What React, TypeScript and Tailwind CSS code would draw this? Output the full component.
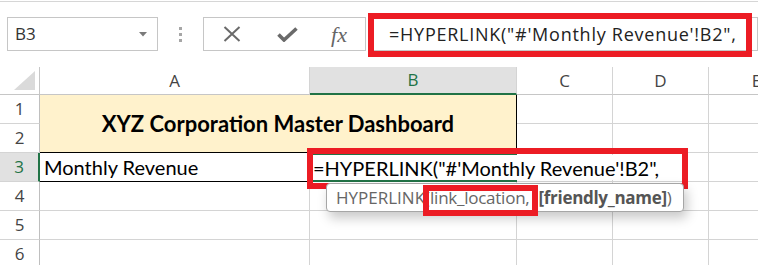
const ui = "font-['Open_Sans','Noto_Sans',sans-serif]"
const cell = "font-['Lato','Noto_Sans',sans-serif]"

const RED = "border-[#ec1c24]"

// column header cell
const ColHead = ({ label, active = false }: { label: string; active?: boolean }) => (
    <div
        className={`flex items-center justify-center border-r border-b ${
            active ? "bg-[#e1e1e1] border-b-2 border-b-[#217346] text-[#217346]" : "bg-white border-b-[#c6c6c6] text-[#444]"
        } border-r-[#d4d4d4] ${ui} text-[17px]`}
    >
        {label}
    </div>
)

// row header cell
const RowHead = ({ label, active = false }: { label: string; active?: boolean }) => (
    <div
        className={`flex items-center justify-center border-b border-r ${
            active ? "bg-[#e1e1e1] border-r-2 border-r-[#217346] text-[#217346]" : "bg-white border-r-[#bfbfbf] text-[#444]"
        } border-b-[#d4d4d4] ${ui} text-[17px]`}
    >
        {label}
    </div>
)

const Blank = () => <div className="border-r border-b border-[#d4d4d4]" />

const App = () => {
    return (
        <div className="relative w-[758px] h-[265px] overflow-hidden bg-white">

            {/* formula bar */}
            <div className="mt-px h-px bg-[#d6d6d6]" />
            <div className="flex items-center h-[34px] mt-[15px] mb-[16px] pl-[7px]">
                {/* name box */}
                <div className={`flex items-center justify-between w-[151px] h-full border border-[#c6c6c6] pl-[7px] pr-[10px] ${ui} text-[17px] text-[#333]`}>
                    <span>B3</span>
                    <svg width="8" height="5" viewBox="0 0 8 5">
                        <path d="M0 0H8L4 4.5Z" fill="#7a7a7a" />
                    </svg>
                </div>

                {/* dots */}
                <div className="flex flex-col gap-[3px] ml-[21px] mr-[21px]">
                    <span className="w-[3px] h-[3px] bg-[#a6a6a6]" />
                    <span className="w-[3px] h-[3px] bg-[#a6a6a6]" />
                    <span className="w-[3px] h-[3px] bg-[#a6a6a6]" />
                </div>

                {/* cancel / enter / fx */}
                <div className="flex items-center w-[163px] h-full border border-[#c6c6c6] text-[#6a6a6a]">
                    <div className="flex justify-center w-[56px]">
                        <svg width="18" height="16" viewBox="0 0 18 16">
                            <path d="M1.5 1L16.5 15M16.5 1L1.5 15" stroke="#6a6a6a" strokeWidth="2" />
                        </svg>
                    </div>
                    <div className="flex justify-center w-[54px]">
                        <svg width="21" height="15" viewBox="0 0 21 15">
                            <path d="M1.5 7.5L7 13L19.5 1.5" stroke="#6a6a6a" strokeWidth="3.6" fill="none" />
                        </svg>
                    </div>
                    <div className="flex justify-center w-[50px] font-['Liberation_Serif',serif] italic text-[22px] text-[#666]">
                        fx
                    </div>
                </div>

                {/* formula input */}
                <div className={`relative flex items-center flex-1 h-full ml-[2px] border border-[#c6c6c6] pl-[20px] ${ui} text-[18px] tracking-[0.75px] text-[#222] whitespace-nowrap`}>
                    =HYPERLINK("#'Monthly Revenue'!B2",
                    <div className={`absolute -left-[1px] -top-[5px] w-[384px] h-[44px] border-[6px] ${RED}`} />
                </div>
            </div>

            {/* sheet */}
            <div className="grid grid-cols-[40px_270px_207px_96px_96px_96px] grid-rows-[28px_repeat(6,29px)]">
                {/* corner */}
                <div className="relative border-r border-b border-[#c6c6c6]">
                    <svg className="absolute right-[4px] bottom-[4px]" width="21" height="19" viewBox="0 0 21 19">
                        <path d="M21 0V19H0Z" fill="#dadada" />
                    </svg>
                </div>
                <ColHead label="A" />
                <ColHead label="B" active />
                <ColHead label="C" />
                <ColHead label="D" />
                <ColHead label="E" />

                {/* rows 1-2 */}
                <RowHead label="1" />
                <div className={`col-span-2 row-span-2 flex items-center justify-center bg-[#fff2cc] border-r border-b border-black ${cell} font-bold text-[22px] text-black`}>
                    XYZ Corporation Master Dashboard
                </div>
                <Blank />
                <Blank />
                <Blank />
                <RowHead label="2" />
                <Blank />
                <Blank />
                <Blank />

                {/* row 3 */}
                <RowHead label="3" active />
                <div className={`flex items-center pl-[4px] border-r border-b border-black ${cell} text-[20px] text-black`}>
                    Monthly Revenue
                </div>
                <div className="relative border-2 border-[#217346]">
                    <div className={`absolute left-0 top-0 h-full flex items-center pl-[1px] pr-[4px] bg-white whitespace-nowrap ${cell} text-[20px] text-black`}>
                        =HYPERLINK("#'Monthly Revenue'!B2",
                    </div>
                    <div className={`absolute -left-[5px] -top-[7px] w-[381px] h-[41px] border-[6px] ${RED}`} />
                </div>
                <Blank />
                <Blank />
                <Blank />

                {/* row 4 */}
                <RowHead label="4" />
                <Blank />
                <div className="relative border-r border-b border-[#d4d4d4]">
                    {/* argument tooltip */}
                    <div className={`absolute left-[16px] top-[1px] z-10 flex items-center h-[29px] w-[358px] pl-[9px] rounded-[4px] border border-[#a6a6a6] bg-white shadow-[3px_6px_12px_rgba(0,0,0,0.22)] whitespace-nowrap ${ui} text-[17px] text-[#666]`}>
                        <span>HYPERLINK(</span>
                        <span className="tracking-[-0.25px]">link_location,</span>
                        <span className="ml-[9px] tracking-[-0.3px]">
                            <b className="text-[#555]">[friendly_name]</b>)
                        </span>
                        <span className={`absolute left-[96px] top-[1px] w-[115px] h-[31px] border-[6px] ${RED}`} />
                    </div>
                </div>
                <Blank />
                <Blank />
                <Blank />

                {/* rows 5-6 */}
                <RowHead label="5" />
                <Blank />
                <Blank />
                <Blank />
                <Blank />
                <Blank />
                <RowHead label="6" />
                <Blank />
                <Blank />
                <Blank />
                <Blank />
                <Blank />
            </div>
        </div>
    )
}

export default App
